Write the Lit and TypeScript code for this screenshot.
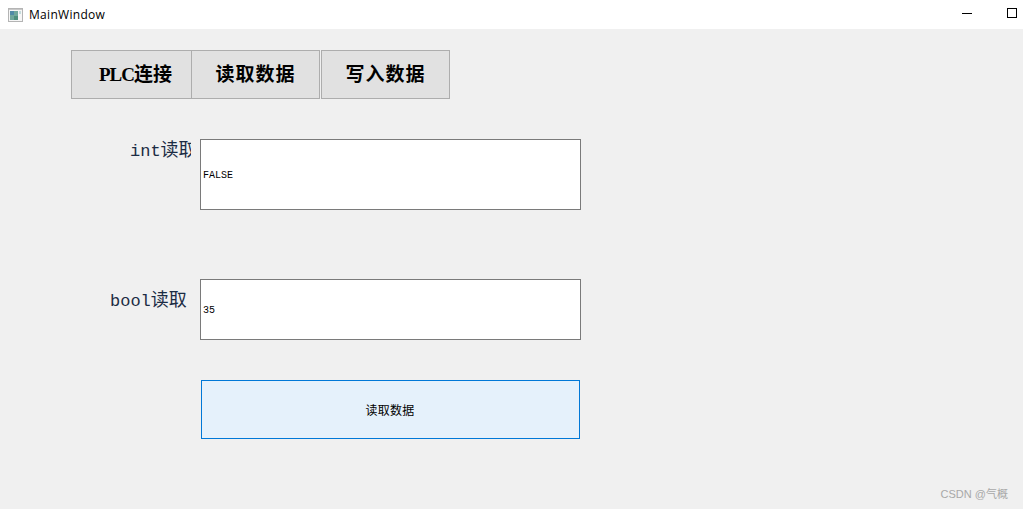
import { LitElement, html, css } from 'lit';
import { customElement } from 'lit/decorators.js';

@customElement('app-root')
export class AppRoot extends LitElement {
  static styles = css`
    * {
      box-sizing: border-box;
    }
    :host {
      display: block;
      width: 1023px;
      height: 509px;
      overflow: hidden;
      background: #f0f0f0;
      font-family: 'Liberation Serif', 'Noto Sans CJK SC', serif;
      color: #000;
    }
    .titlebar {
      display: flex;
      align-items: center;
      height: 29px;
      padding: 0 6px 0 8px;
      background: #fff;
    }
    .app-icon {
      display: block;
      margin-right: 6px;
    }
    .title {
      flex: 1;
      font-family: 'Open Sans', 'Noto Sans', sans-serif;
      font-size: 12px;
      letter-spacing: 0.3px;
    }
    .win-controls {
      display: flex;
      align-items: center;
      gap: 35px;
      margin-bottom: 3px;
    }
    .win-controls svg {
      display: block;
    }
    .content {
      display: flex;
      flex-direction: column;
      height: 480px;
      padding: 21px 0 0 71px;
    }
    .toolbar {
      display: flex;
      height: 49px;
    }
    .tool {
      height: 100%;
      padding: 0 0 4px;
      border: 1px solid #adadad;
      background: #e1e1e1;
      font-family: inherit;
      font-size: 19px;
      font-weight: 700;
      color: #000;
    }
    .tool.plc {
      width: 121px;
      padding-left: 8px;
    }
    .tool.plc .latin {
      letter-spacing: -1px;
    }
    .tool.read {
      width: 129px;
      margin-left: -1px;
      letter-spacing: 1px;
    }
    .tool.write {
      width: 129px;
      margin-left: 1px;
      letter-spacing: 1px;
    }
    .row {
      display: flex;
    }
    .row.first {
      margin-top: 40px;
      height: 71px;
    }
    .row.second {
      margin-top: 69px;
      height: 61px;
    }
    .label {
      width: 120px;
      height: 22px;
      margin-right: 9px;
      overflow: hidden;
      white-space: nowrap;
      line-height: 22px;
      font-size: 18px;
      color: #1c2c44;
    }
    .label .latin {
      font-family: 'Liberation Mono', monospace;
      font-size: 17px;
    }
    .label.int {
      padding-left: 59px;
    }
    .label.bool {
      margin-top: 10px;
      padding-left: 39px;
    }
    .field {
      display: flex;
      align-items: center;
      width: 381px;
      padding: 2px 0 0 2px;
      border: 1px solid #7a7a7a;
      background: #fff;
      font-family: 'Liberation Mono', monospace;
      font-size: 10px;
    }
    .action {
      width: 379px;
      height: 59px;
      margin: 40px 0 0 130px;
      padding: 0 1px 0 0;
      border: 1px solid #0078d7;
      background: #e5f1fb;
      font-family: 'Noto Sans CJK SC', sans-serif;
      font-size: 12px;
      letter-spacing: 0.25px;
      color: #000;
    }
    .watermark {
      align-self: flex-end;
      margin: 48px 15px 0 0;
      font-family: 'Liberation Sans', 'Noto Sans CJK SC', sans-serif;
      font-size: 11px;
      line-height: 14px;
      color: #a8a8a8;
    }
  `;

  render() {
    return html`
      <div class="titlebar">
        <svg class="app-icon" width="15" height="14" viewBox="0 0 15 14">
          <rect x="0.5" y="0.5" width="14" height="13" fill="#f6f6f6" stroke="#b4b4b4" />
          <rect x="1" y="1" width="13" height="1" fill="#c8c8c8" />
          <rect x="2" y="3" width="8" height="9" fill="#6fa79c" />
          <rect x="2" y="3" width="4" height="4" fill="#4f8aa6" />
          <rect x="6" y="8" width="4" height="4" fill="#4d8f7c" />
          <rect x="11" y="3" width="2" height="3" fill="#c4dcdc" />
        </svg>
        <span class="title">MainWindow</span>
        <div class="win-controls">
          <svg width="10" height="10" viewBox="0 0 10 10">
            <rect x="0" y="5" width="10" height="1" fill="#000" />
          </svg>
          <svg width="10" height="10" viewBox="0 0 10 10">
            <rect x="0.5" y="0.5" width="9" height="9" fill="none" stroke="#000" />
          </svg>
        </div>
      </div>
      <div class="content">
        <div class="toolbar">
          <button class="tool plc"><span class="latin">PLC</span>连接</button>
          <button class="tool read">读取数据</button>
          <button class="tool write">写入数据</button>
        </div>
        <div class="row first">
          <div class="label int"><span class="latin">int</span>读取</div>
          <div class="field">FALSE</div>
        </div>
        <div class="row second">
          <div class="label bool"><span class="latin">bool</span>读取</div>
          <div class="field">35</div>
        </div>
        <button class="action">读取数据</button>
        <div class="watermark">CSDN @气概</div>
      </div>
    `;
  }
}
